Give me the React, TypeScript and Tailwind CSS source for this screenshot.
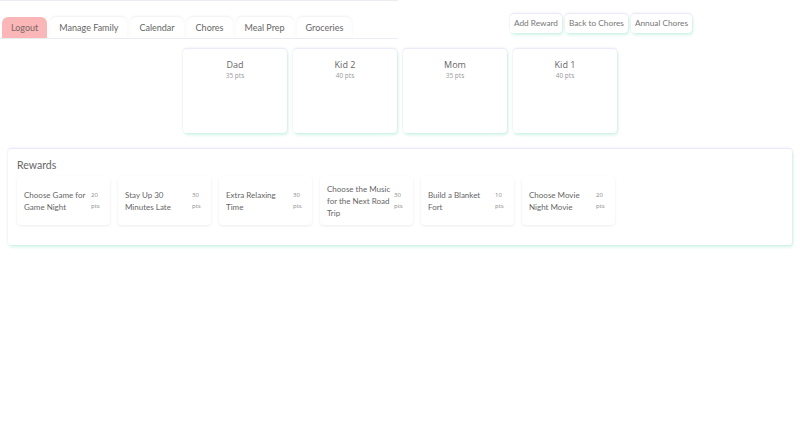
import React from 'react';

interface Member {
  name: string;
  points: number;
}

interface Reward {
  title: string;
  points: number;
}

const tabs = ['Manage Family', 'Calendar', 'Chores', 'Meal Prep', 'Groceries'];

const members: Member[] = [
  { name: 'Dad', points: 35 },
  { name: 'Kid 2', points: 40 },
  { name: 'Mom', points: 35 },
  { name: 'Kid 1', points: 40 },
];

const rewards: Reward[] = [
  { title: 'Choose Game for Game Night', points: 20 },
  { title: 'Stay Up 30 Minutes Late', points: 30 },
  { title: 'Extra Relaxing Time', points: 30 },
  { title: 'Choose the Music for the Next Road Trip', points: 30 },
  { title: 'Build a Blanket Fort', points: 10 },
  { title: 'Choose Movie Night Movie', points: 20 },
];

// soft lavender on top, mint below – the glow around every box
const glow = 'shadow-[0_-1px_2px_rgba(200,190,235,0.45),1px_2px_3px_rgba(150,230,200,0.45)]';

const App = () => {
  return (
    <div className="min-h-[445px] w-[800px] bg-white font-['Lato',sans-serif] text-[#666]">
      {/* Top bar */}
      <div className="flex items-start justify-between">
        <nav className="w-[398px] border-t border-b border-[#ecebf2] pt-[16px]">
          <div className="flex items-end gap-[3px] pl-[2px]">
            <button className="h-[21px] rounded-t-[6px] bg-[#fbb7b7] px-[9px] text-[9px] text-[#7a6666]">
              Logout
            </button>
            {tabs.map((tab) => (
              <button key={tab} className="h-[21px] rounded-t-[6px] px-[9px] text-[9px] text-[#666] shadow-[0_-1px_2px_rgba(225,225,235,0.5)]">
                {tab}
              </button>
            ))}
          </div>
        </nav>

        <div className="mr-[108px] mt-[14px] flex gap-[3px]">
          {['Add Reward', 'Back to Chores', 'Annual Chores'].map((label) => (
            <button key={label} className={`h-[19px] rounded-[4px] bg-white px-[4px] text-[8.25px] text-[#777] ${glow}`}>
              {label}
            </button>
          ))}
        </div>
      </div>

      {/* Family members */}
      <div className="mt-[10px] flex justify-center gap-[6px]">
        {members.map((m) => (
          <div key={m.name} className={`h-[84px] w-[104px] rounded-[4px] bg-white pt-[9px] text-center ${glow}`}>
            <div className="font-['Open_Sans',sans-serif] text-[9px] leading-[13px] text-[#666]">{m.name}</div>
            <div className="font-['Open_Sans',sans-serif] text-[6.5px] leading-[10px] text-[#999]">{m.points} pts</div>
          </div>
        ))}
      </div>

      {/* Rewards */}
      <section className={`mx-[8px] mt-[16px] h-[96px] rounded-[3px] bg-white px-[9px] pt-[9px] ${glow}`}>
        <h3 className="text-[10.5px] leading-[14px] text-[#666]">Rewards</h3>
        <div className="mt-[4px] flex gap-[8px]">
          {rewards.map((r) => (
            <div key={r.title} className="flex h-[49px] w-[93px] items-center rounded-[4px] bg-white pl-[7px] pr-[4px] shadow-[0_1px_3px_rgba(0,0,0,0.08)]">
              <div className="w-[64px] text-[8px] leading-[12px] text-[#666]">{r.title}</div>
              <div className="ml-[3px] font-['Open_Sans',sans-serif] text-[6px] leading-[11px] text-[#888]">
                {r.points}
                <br />
                pts
              </div>
            </div>
          ))}
        </div>
      </section>
    </div>
  );
};

export default App;
